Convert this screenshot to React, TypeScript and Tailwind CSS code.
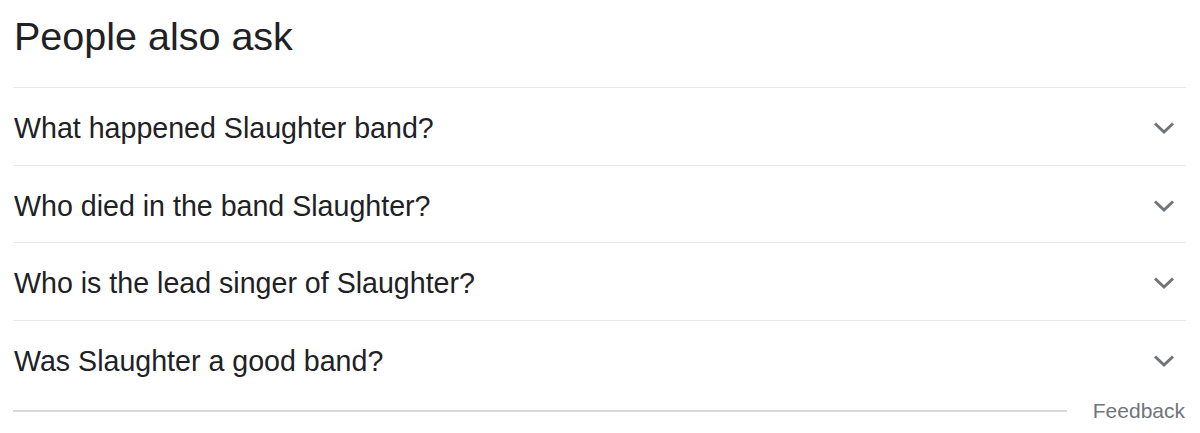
import React from "react";

const questions = [
  "What happened Slaughter band?",
  "Who died in the band Slaughter?",
  "Who is the lead singer of Slaughter?",
  "Was Slaughter a good band?",
];

function Chevron() {
  return (
    <svg width="22" height="14" viewBox="0 0 22 14" fill="none" className="shrink-0">
      <path d="M2 2.5 L11 11 L20 2.5" stroke="#70757a" strokeWidth="3" strokeLinecap="butt" strokeLinejoin="miter" />
    </svg>
  );
}

export default function App() {
  return (
    <div className="w-[1200px] h-[433px] bg-white overflow-hidden" style={{ fontFamily: '"Liberation Sans", Arial, sans-serif' }}>
      <div className="pl-[13px] pr-[14px]">
        <div className="pt-[16px] pb-[31px] pl-[1px] text-[39.5px] leading-[40px] text-[#202124]">People also ask</div>
        <div className="border-t border-[#e8e8e8]">
          {questions.map((q, i) => (
            <div
              key={i}
              className={`h-[77.5px] flex items-center justify-between pl-[1px] pr-[11px] pt-[4px] ${i < questions.length - 1 ? "border-b border-[#e8e8e8]" : ""}`}
            >
              <span className="text-[28.6px] leading-[32px] text-[#202124]">{q}</span>
              <Chevron />
            </div>
          ))}
        </div>
        <div className="flex items-center mt-[1px]">
          <div className="flex-1 h-[2px] bg-[#dadada]" />
          <span className="ml-[26px] text-[21px] leading-[24px] text-[#70757a] pr-[1px]">Feedback</span>
        </div>
      </div>
    </div>
  );
}
